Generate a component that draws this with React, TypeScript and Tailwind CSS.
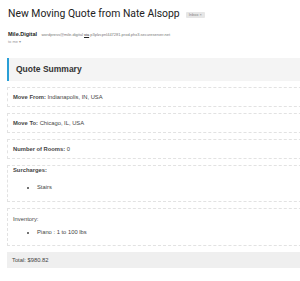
export default function App() {
  return (
    <div className="w-[300px] h-[281px] bg-white overflow-hidden font-['Liberation_Sans',Arial,sans-serif]">
      <div className="pl-[8px] pt-[7px] flex items-center gap-[6px]">
        <h1 className="text-[10.4px] leading-[14px] text-[#222] font-['Roboto',sans-serif] whitespace-nowrap">
          New Moving Quote from Nate Alsopp
        </h1>
        <span className="bg-[#e6e6e6] text-[#888] text-[4px] leading-[6px] px-[3px] rounded-[1px] mt-[1px]">
          Inbox ×
        </span>
      </div>
      <div className="pl-[8px] mt-[6px] leading-[7px] whitespace-nowrap">
        <span className="font-bold text-[#222] text-[5.5px]">Mile.Digital</span>{" "}
        <span className="text-[#777] text-[4px]">
          wordpress@mile.digital <span className="underline text-[#222]">via</span> p3plzcpnl447281.prod.phx3.secureserver.net
        </span>
      </div>
      <div className="pl-[8px] text-[4px] leading-[7px] text-[#999]">to me ▾</div>

      <div className="ml-[7px] mt-[13px] w-[310px] flex flex-col gap-[6px] text-[5.8px] text-[#444]">
        <div className="h-[23px] bg-[#f4f4f4] border-l-[2px] border-[#2a9fd6] flex items-center pl-[7px]">
          <span className="text-[8.5px] font-bold text-[#333]">Quote Summary</span>
        </div>
        <div className="h-[20px] border border-dashed border-[#e2e2e2] flex items-center pl-[5px]">
          <span><b>Move From:</b> Indianapolis, IN, USA</span>
        </div>
        <div className="h-[20px] border border-dashed border-[#e2e2e2] flex items-center pl-[5px]">
          <span><b>Move To:</b> Chicago, IL, USA</span>
        </div>
        <div className="h-[20px] border border-dashed border-[#e2e2e2] flex items-center pl-[5px]">
          <span><b>Number of Rooms:</b> 0</span>
        </div>
        <div className="h-[37px] border border-dashed border-[#e2e2e2] pl-[5px]">
          <b>Surcharges:</b>
          <ul className="list-disc pl-[24px] mt-[8px]">
            <li>Stairs</li>
          </ul>
        </div>
        <div className="h-[38px] border border-dashed border-[#e2e2e2] pl-[5px] pt-[6px]">
          <span>Inventory:</span>
          <ul className="list-disc pl-[24px] mt-[4px]">
            <li>Piano : 1 to 100 lbs</li>
          </ul>
        </div>
        <div className="h-[16px] bg-[#efefef] flex items-center pl-[5px]">
          <span>Total: $980.82</span>
        </div>
      </div>
    </div>
  );
}
